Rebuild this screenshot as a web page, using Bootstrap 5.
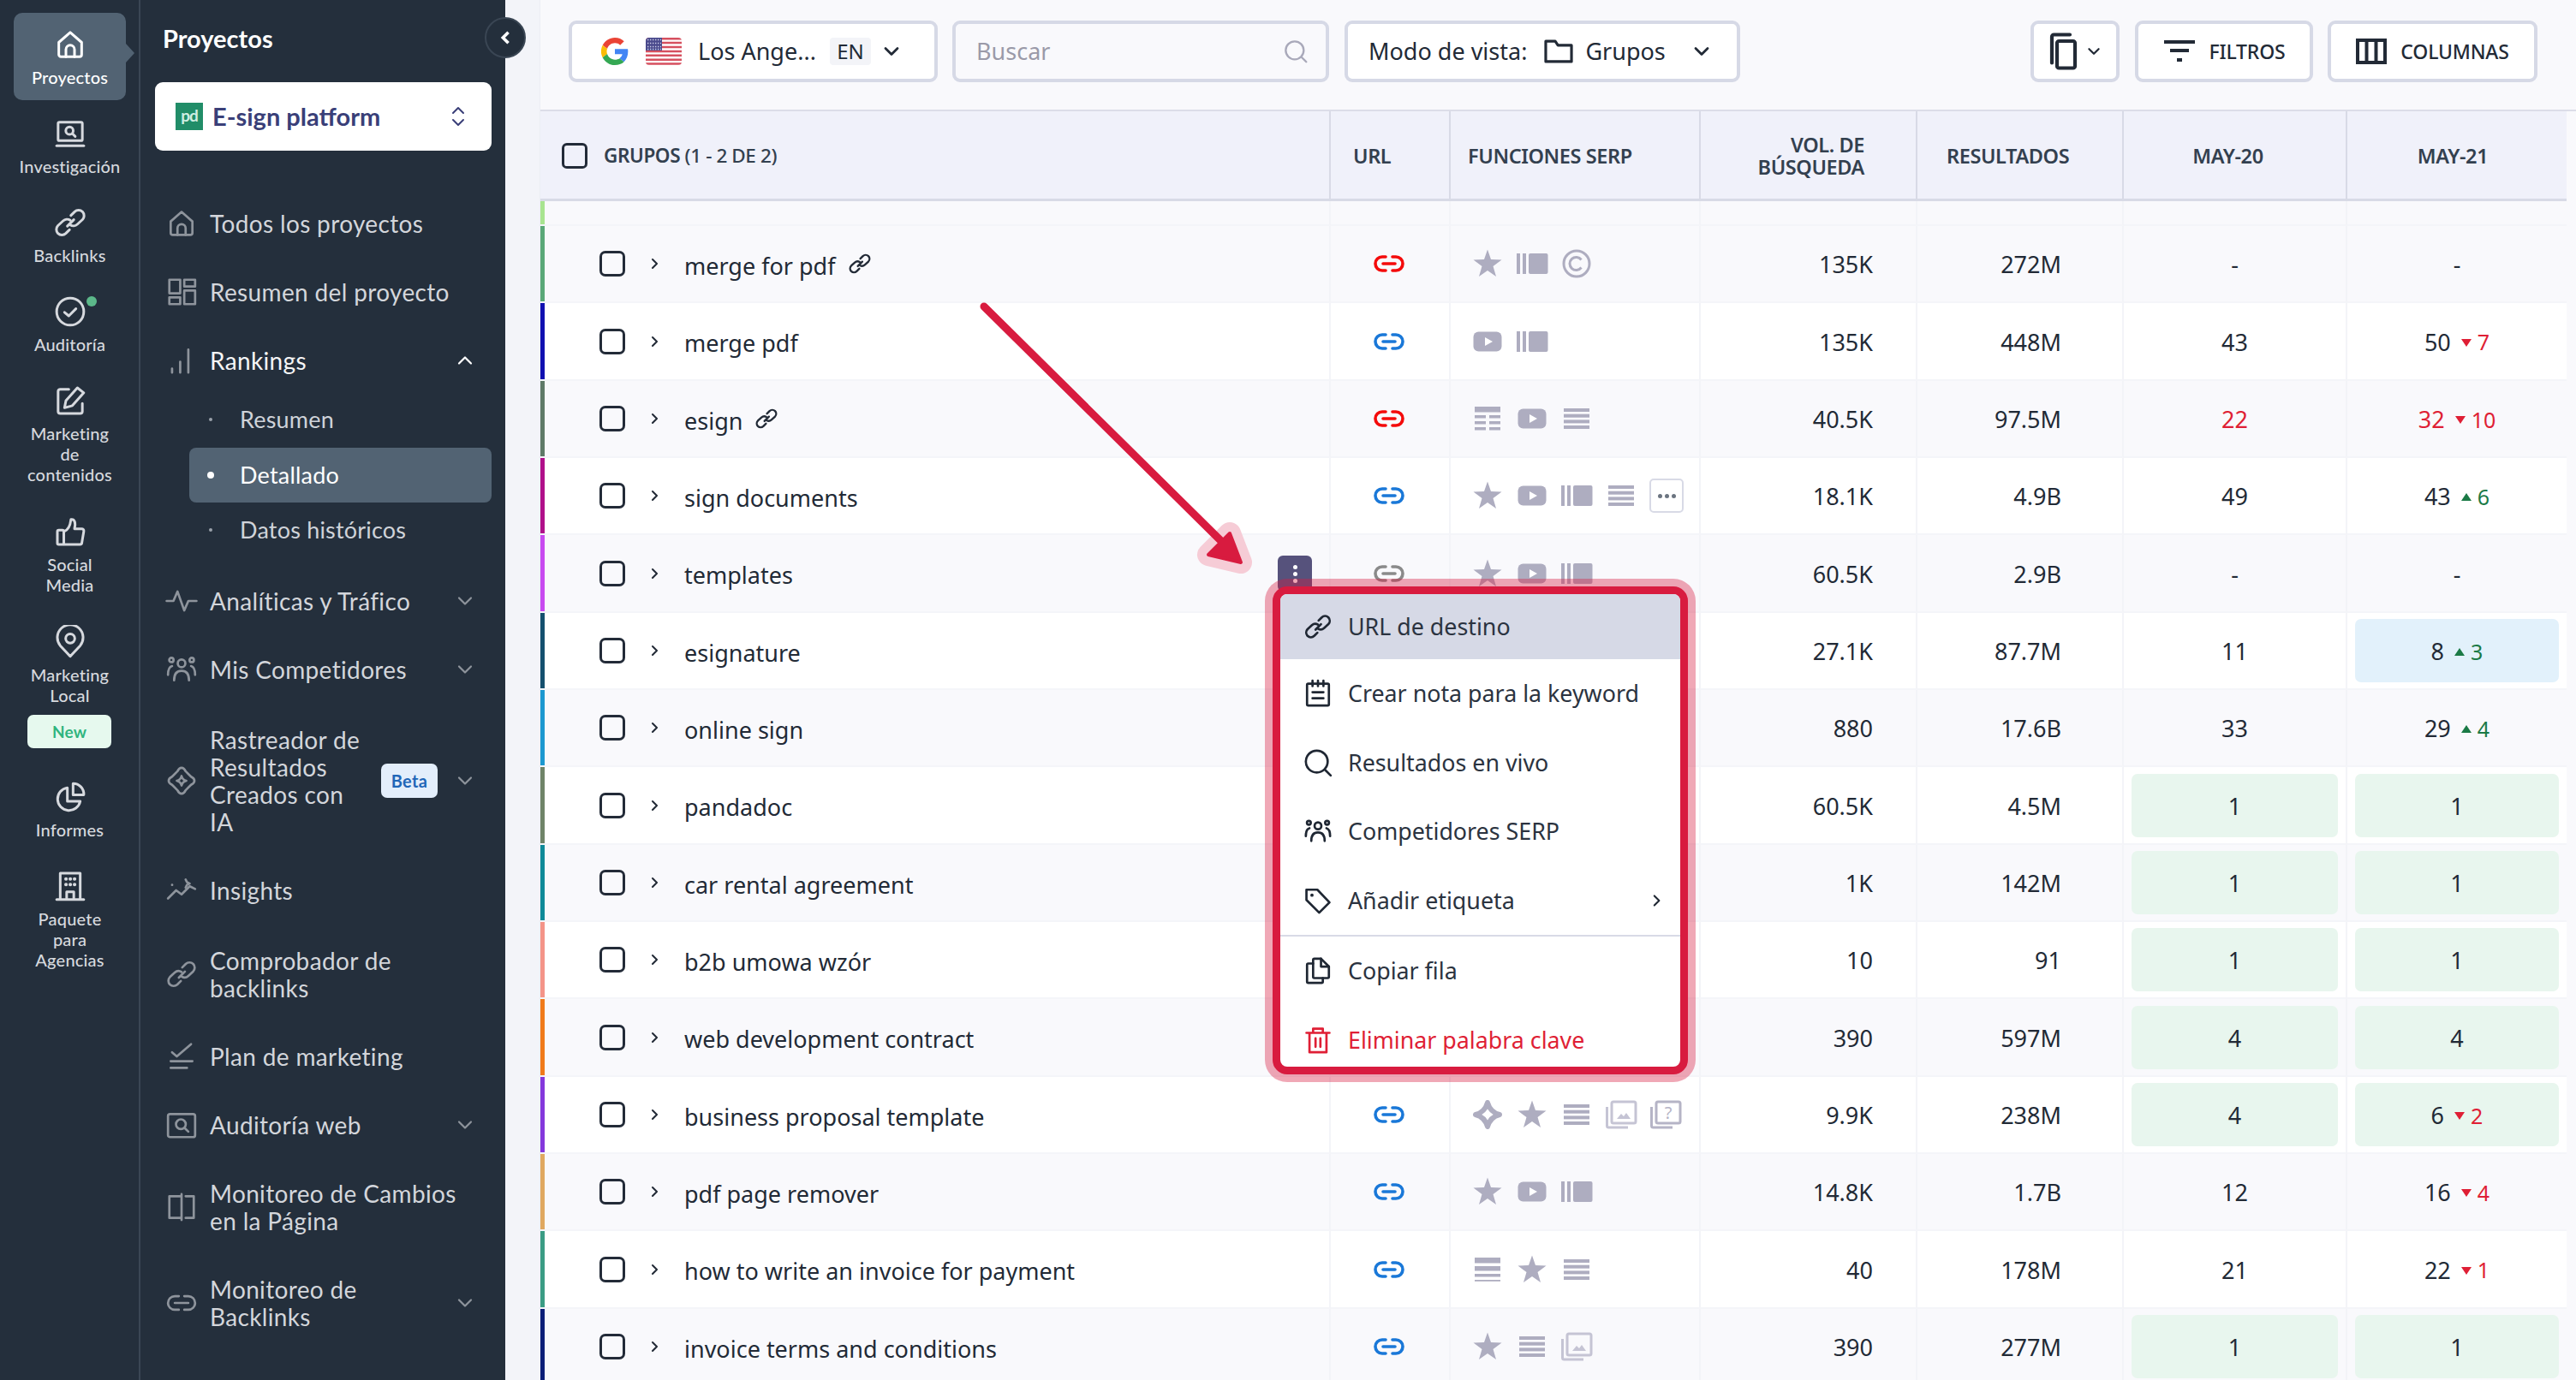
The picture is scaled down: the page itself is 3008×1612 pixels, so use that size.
<!DOCTYPE html>
<html lang="es">
<head>
  <meta charset="UTF-8">
  <meta name="viewport" content="width=device-width, initial-scale=1">
  <title>Rankings - Detallado</title>
  <link href="https://cdn.jsdelivr.net/npm/bootstrap@5.3.5/dist/css/bootstrap.min.css" rel="stylesheet">
  <style>
    body { width: 3008px; height: 1612px; overflow: hidden; background: #f3f4f9; position: relative; font-family: "Noto Sans", sans-serif; color: #222a36; }
    a { text-decoration: none; }
    .ico { fill: none; stroke: currentColor; stroke-width: 1.8; stroke-linecap: round; stroke-linejoin: round; flex: none; }
    .ico.w2 { stroke-width: 2; }
    .ico.w3 { stroke-width: 2.8; }
    .ico.w4 { stroke-width: 4; stroke-linecap: butt; stroke-linejoin: miter; }

    /* rail */
    .rail { width: 164px; background: #242f3c; border-right: 2px solid #3a4654; font-family: Lato, sans-serif; flex: none; }
    .rail-item { width: 131px; margin-left: 16px; padding: 19px 0 17px; color: #d6d9de; font-size: 20px; line-height: 24px; font-weight: 500; text-align: center; position: relative; letter-spacing: .2px; }
    .rail-item .ico { width: 40px; height: 40px; margin: -2px auto 6px; display: block; stroke-width: 1.8; }
    .rail-on { background: #526373; border-radius: 10px; color: #fff; padding-bottom: 15px; margin-top: 15px; margin-bottom: 2px; }
    .rail-on::after { content: ""; position: absolute; left: 100%; top: 36px; border-left: 10px solid #526373; border-top: 11px solid transparent; border-bottom: 11px solid transparent; }
    .rail-tall { padding-bottom: 18px; }
    .rail-dot { position: absolute; left: 85px; top: 19px; width: 12px; height: 12px; border-radius: 50%; background: #5cb88a; }
    .rail-new { display: block; margin: 11px 0 3px 16px; height: 39px; background: #e6f9ee; color: #2fb57e; border-radius: 7px; font-weight: 700; font-size: 19px; line-height: 40px; width: 98px; }

    /* project panel */
    .panel { width: 426px; background: #242f3c; font-family: Lato, sans-serif; flex: none; padding-left: 17px; padding-right: 16px; }
    .panel-title { color: #fff; font-size: 29px; font-weight: 700; line-height: 32px; padding: 29px 0 0 9px; margin-bottom: 35px; }
    .project-pick { height: 80px; background: #fff; border-radius: 9px; padding: 0 30px 0 24px; color: #3a3f78; font-size: 29px; font-weight: 700; margin-bottom: 45px; }
    .pd-logo { width: 32px; height: 32px; background: #218d68; color: #cfeee2; font-size: 19px; font-weight: 700; line-height: 30px; text-align: center; margin-right: 11px; letter-spacing: -1px; }
    .side-link { display: flex; align-items: center; padding: 24px 21px 24px 15px; color: #d3d6db; font-size: 28px; line-height: 32px; letter-spacing: .35px; }
    .side-link > .ico:first-child { width: 38px; height: 38px; margin: -3px 14px -3px -3px; color: #8e949c; stroke-width: 1.7; }
    .side-link .side-text { flex: 1 1 auto; min-width: 0; }
    .side-link .side-more { width: 20px; height: 20px; color: #8e949c; stroke-width: 2.2; margin-left: 8px; }
    .side-on { color: #f4f5f6; }
    .side-nudge { margin-top: 2px; }
    .side-sub { margin: -3px 0 10px 40px; }
    .sub-link { height: 64.5px; border-radius: 8px; color: #cfd3d9; font-size: 27px; padding-left: 21px; letter-spacing: .2px; }
    .sub-link i { display: block; width: 4px; height: 4px; border-radius: 50%; background: #9aa1aa; margin-right: 32px; margin-left: 2px; }
    .sub-on { background: #526373; color: #fff; }
    .sub-on i { width: 8px; height: 8px; background: #fff; margin-left: 0; margin-right: 30px; }
    .beta-tag { width: 66px; height: 40px; border-radius: 7px; background: #e3eefb; color: #1f66b8; font-size: 20px; font-weight: 700; line-height: 41px; text-align: center; flex: none; margin-right: 14px; }
    .rastreo { max-width: 184px; }
    .collapse-btn { position: absolute; left: 566px; top: 20px; width: 48px; height: 48px; border-radius: 50%; background: #242f3c; border: 2px solid #3a4654; color: #fff; }

    /* toolbar */
    .main-area { width: 2378px; margin-left: 40px; flex: none; background: #f9f9fc; overflow: hidden; border-left: 1px solid #eceef4; }
    .topbar { height: 130px; padding: 24px 45px 0 33px; border-bottom: 2px solid #dcdde8; background: #f9f9fc; font-size: 27px; }
    .tool-box { height: 72px; border: 4px solid #d6d9e6; border-radius: 9px; background: #fff; color: #222a36; font-size: 27px; padding: 0; }
    .tool-small { font-size: 23px; font-weight: 500; letter-spacing: -.2px; }
    .tool-loc { width: 431px; }
    .tool-search { width: 440px; margin-left: 17px; padding: 0 21px 0 24px; background: transparent; }
    .tool-mode { width: 462px; margin-left: 18px; padding-left: 24px; }
    .tool-copy { width: 104px; }
    .tool-filter { width: 208px; margin-left: 18px; }
    .tool-cols { width: 245px; margin-left: 17px; }
    .g-logo { margin-left: 34px; }
    .us-flag { margin-left: 20px; flex: none; }
    .loc-name { margin-left: 19px; }
    .lang-tag { background: #f3f4f8; border-radius: 4px; width: 48px; height: 32px; font-size: 24px; line-height: 32px; text-align: center; margin-left: 16px; }
    .loc-more { margin-left: 14px; }
    .search-field { border: 0; background: transparent; font-size: 27px; padding: 0; outline: none; flex: 1; min-width: 0; color: #222a36; }
    .search-field::placeholder { color: #9a9aa8; }
    .search-ico { color: #a9a9ba; }
    .mode-folder { margin-left: 18px; }
    .mode-name { margin-left: 12px; }
    .mode-more { margin-left: 32px; }

    /* table */
    .kw-table { table-layout: fixed; width: 2366px; margin: 0; border-collapse: separate; border-spacing: 0; font-size: 27px; color: #222a36; }
    .col-kw { width: 923px; }
    .col-url { width: 140px; }
    .col-serp { width: 292px; }
    .col-vol { width: 253px; }
    .col-res { width: 241px; }
    .col-m20 { width: 261px; }
    .col-m21 { width: 256px; }
    .kw-table th { height: 105px; background: #f0f1fa; border-right: 2px solid #d8dae6; border-bottom: 3px solid #d8dae6; font-size: 23.5px; font-weight: 600; color: #33404f; line-height: 26px; padding: 2px 18px 0; vertical-align: middle; letter-spacing: -.4px; }
    .kw-table th:last-child { border-right: 0; }
    .th-group { padding-left: 7px; }
    .th-label { margin-left: 19px; font-size: 22.5px; }
    .th-url { padding-left: 26px !important; }
    .th-serp { padding-left: 20px !important; }
    .th-vol { padding-right: 60px !important; }
    .th-res { padding-left: 34px !important; }
    .th-m20 { padding-right: 34px !important; }
    .th-m21 { padding-right: 28px !important; }
    .kw-table td { height: 90px; padding: 0; border-right: 2px solid #f3f4f8; border-bottom: 2px solid #f4f5f9; background: #fff; vertical-align: middle; position: relative; }
    .kw-table tr:nth-child(3n) td { height: 91px; }
    .kw-table tr:nth-child(even) td { background: #f9f9fc; }
    .kw-table td:last-child { border-right: 0; }
    .kw-table td:first-child::before { content: ""; position: absolute; left: 0; top: 0; bottom: 0; width: 5px; background: var(--bar); }
    .kw-table .part-row td { height: 29px; background: #f9f9fc; }
    .kw-check { width: 30px; height: 30px; margin: 0; border: 3px solid #232b38; border-radius: 4px; background-color: transparent; flex: none; }
    .kw-name { padding-left: 69px; }
    .kw-label { margin-top: 6px; }
    .kw-arrow { width: 16px; height: 20px; margin: 0 26px 0 27px; }
    .kw-link { width: 28px; height: 28px; margin-left: 14px; }
    .url-chip { width: 36px; height: 20px; display: block; margin: 0 auto 0 50px; fill: none; stroke: currentColor; stroke-width: 3.6; stroke-linecap: round; }
    .chip-red { color: #f40b0b; }
    .chip-blue { color: #1a78d8; }
    .chip-grey { color: #8a8a8a; }
    .serp-row { padding-left: 24px; gap: 14px; }
    .serp-ico { width: 38px; height: 34px; fill: #aeadc0; flex: none; }
    .serp-more { width: 40px; height: 40px; border: 2px solid #d8dae6; border-radius: 5px; gap: 3px; flex: none; background: #fff; }
    .serp-more i { width: 5px; height: 5px; border-radius: 50%; background: #6b7480; display: block; }
    .num-vol { text-align: right; padding: 3px 50px 0 0 !important; }
    .num-res { text-align: right; padding: 3px 71px 0 0 !important; }
    .rank-cell { padding: 7px 9px !important; text-align: center; }
    .rank-box { height: 74px; border-radius: 7px; padding-top: 3px; }
    .rank-green { background: #e8f6ee; }
    .rank-blue { background: #e2f1fb; }
    .rank-red { color: #df1f35; }
    .delta { font-size: 25px; display: inline-flex; align-items: center; margin-left: 12px; }
    .delta i { display: block; width: 0; height: 0; border-left: 6px solid transparent; border-right: 6px solid transparent; margin-right: 7px; }
    .delta-down { color: #df1f35; }
    .delta-down i { border-top: 9px solid #df1f35; }
    .delta-up { color: #1b7a46; }
    .delta-up i { border-bottom: 9px solid #1b7a46; }

    /* overlays */
    .row-kebab { position: absolute; left: 1492px; top: 649px; width: 40px; height: 42px; background: #56527c; border-radius: 6px; gap: 3px; }
    .row-kebab i { display: block; width: 5px; height: 5px; background: #fff; border-radius: 50%; }
    .big-arrow { position: absolute; left: 0; top: 0; width: 3008px; height: 1612px; pointer-events: none; }
    .row-menu { position: absolute; left: 1486px; top: 685px; width: 485px; height: 570px; margin: 0; padding: 0; border: 9px solid #d81b3f; border-radius: 17px; box-shadow: 0 0 0 9px rgba(216, 27, 63, .38); font-size: 26.8px; overflow: hidden; --bs-dropdown-min-width: 0; }
    .row-menu .dropdown-item { height: 80.5px; display: flex; align-items: center; padding: 0 0 0 79px; color: #2b3340; position: relative; }
    .row-menu .dropdown-item .ico { position: absolute; left: 27px; top: 23px; width: 34px; height: 34px; color: #1f2733; stroke-width: 1.9; }
    .row-menu .item-first { height: 76px; background: #d6d9e6; }
    .row-menu .dropdown-item.item-first .ico { top: 21px; }
    .row-menu .dropdown-item.item-danger, .row-menu .dropdown-item.item-danger .ico { color: #df1f35; }
    .row-menu .dropdown-divider { margin: 0; border-top: 2px solid #d8dae6; opacity: 1; }
    .row-menu .dropdown-item .item-go { left: auto; right: 19px; top: 32px; width: 16px; height: 16px; stroke-width: 2.6; }
  </style>
</head>
<body>

  <svg width="0" height="0" class="position-absolute">
    <defs>
      <symbol id="i-home" viewBox="0 0 24 24"><path d="M4 10.5 12 3.500l8 7V19a1.500 1.500 0 0 1-1.500 1.500h-13A1.500 1.500 0 0 1 4 19z"/><path d="M9 20.500v-5a3 3 0 0 1 6 0v5"/></symbol>
      <symbol id="i-laptop" viewBox="0 0 24 24"><rect x="3.500" y="4" width="17" height="13" rx="1"/><path d="M2.500 20.500h19"/><circle cx="11.500" cy="10" r="2.600"/><path d="m13.500 12 2 2"/></symbol>
      <symbol id="i-chain" viewBox="0 0 24 24"><path d="M10 14.500 14.500 10"/><path d="m12.500 7 2.600-2.600a4 4 0 0 1 5.500 0 4 4 0 0 1 0 5.500L17 13.200a4 4 0 0 1-5 .4"/><path d="M11.500 17 8.900 19.600a4 4 0 0 1-5.500 0 4 4 0 0 1 0-5.500L7 10.800a4 4 0 0 1 5-.4"/></symbol>
      <symbol id="i-check" viewBox="0 0 24 24"><circle cx="12" cy="12" r="9.500"/><path d="m8 12.500 3 2.500 5-5"/></symbol>
      <symbol id="i-edit" viewBox="0 0 24 24"><path d="M11 4H5a1.500 1.500 0 0 0-1.500 1.500v14A1.500 1.500 0 0 0 5 21h14a1.500 1.500 0 0 0 1.500-1.500V14"/><path d="m9 12 8-9 4.500 3.500-8 9L8 17z"/></symbol>
      <symbol id="i-thumb" viewBox="0 0 24 24"><rect x="3" y="11" width="4.500" height="10" rx="1"/><path d="M7.500 12c3-1 4.500-4 5-8.500 2.500-.5 3.500 2 2.500 6.500h5a1.500 1.500 0 0 1 1.500 1.800l-1.300 7.700a1.500 1.500 0 0 1-1.500 1.500H7.500"/></symbol>
      <symbol id="i-pin" viewBox="0 0 24 24"><path d="M12 22 5 14.500a9 9 0 1 1 14 0z"/><circle cx="12" cy="9.500" r="3.200"/></symbol>
      <symbol id="i-pie" viewBox="0 0 24 24"><path d="M10 5.500a8 8 0 1 0 9 9.500h-9z"/><path d="M14 2.500a7.500 7.500 0 0 1 7.500 8H14z"/></symbol>
      <symbol id="i-office" viewBox="0 0 24 24"><path d="M5 21V3h14v18"/><path d="M2.500 21.500h19"/><path d="M9.500 21v-5h5v5"/><path d="M9 7h.1M12 7h.1M15 7h.1M9 11h.1M12 11h.1M15 11h.1" stroke-width="2.400"/></symbol>
      <symbol id="i-grid" viewBox="0 0 24 24"><rect x="3" y="3" width="8" height="10"/><rect x="14" y="3" width="8" height="5"/><rect x="3" y="16" width="8" height="5"/><rect x="14" y="11" width="8" height="10"/></symbol>
      <symbol id="i-bars" viewBox="0 0 24 24"><path d="M5 21v-3M11 21v-8M17 21V4"/></symbol>
      <symbol id="i-pulse" viewBox="0 0 24 24"><path d="M1 12h5l3-7 5 14 3-7h6"/></symbol>
      <symbol id="i-people" viewBox="0 0 24 24"><circle cx="12" cy="7.500" r="2.800"/><circle cx="4.500" cy="5" r="1.600"/><circle cx="19.500" cy="5" r="1.600"/><path d="M6.500 20c0-5 2-7 5.500-7s5.500 2 5.500 7"/><path d="M2 16c0-4 1-6 3-6.500M22 16c0-4-1-6-3-6.500"/></symbol>
      <symbol id="i-ai" viewBox="0 0 24 24"><path d="M12 2.500c1.500 0 2.300 1 3 2.500l4 4c1.500.7 2.500 1.500 2.500 3s-1 2.300-2.500 3l-4 4c-.7 1.500-1.500 2.500-3 2.500s-2.300-1-3-2.500l-4-4c-1.500-.7-2.500-1.500-2.500-3s1-2.300 2.500-3l4-4c.7-1.500 1.500-2.500 3-2.500z"/><path d="M12 8.500c.5 2 1.500 3 3.500 3.500-2 .5-3 1.500-3.500 3.500-.5-2-1.500-3-3.500-3.500 2-.5 3-1.500 3.500-3.500z"/></symbol>
      <symbol id="i-insight" viewBox="0 0 24 24"><path d="m2 18 6-6 4 3 6-6 4 2"/><path d="M5 8h.1M15 4l1 2 2 1-2 1-1 2"/></symbol>
      <symbol id="i-checklist" viewBox="0 0 24 24"><path d="m5 9 3.500 3L19 3"/><path d="M4 15.500h16M4 20.500h12"/></symbol>
      <symbol id="i-websearch" viewBox="0 0 24 24"><rect x="2" y="4" width="20" height="17" rx="1.500"/><circle cx="11.500" cy="11.500" r="3.600"/><path d="m14.500 14.500 2.500 2.500"/></symbol>
      <symbol id="i-page" viewBox="0 0 24 24"><path d="M12 21.500v-19M11 4H3v16h8M15 4h6v16h-6"/></symbol>
      <symbol id="i-chainh" viewBox="0 0 24 24"><path d="M10 7H7a5 5 0 0 0 0 10h3M14 7h3a5 5 0 0 1 0 10h-3M7 12h10"/></symbol>
      <symbol id="i-down" viewBox="0 0 20 20"><path d="m3 6.500 7 7 7-7"/></symbol>
      <symbol id="i-up" viewBox="0 0 20 20"><path d="m3 13.500 7-7 7 7"/></symbol>
      <symbol id="i-right" viewBox="0 0 20 20"><path d="m6 3 7 7-7 7"/></symbol>
      <symbol id="i-left" viewBox="0 0 20 20"><path d="m14 3-7 7 7 7"/></symbol>
      <symbol id="i-note" viewBox="0 0 24 24"><rect x="3" y="4" width="18" height="18" rx="1"/><path d="M7.500 1.500V6M12 1.500V6M16.500 1.500V6M7.500 11h9M7.500 16h9"/></symbol>
      <symbol id="i-search" viewBox="0 0 24 24"><circle cx="11" cy="11" r="9"/><path d="m18 18 4.500 4.500"/></symbol>
      <symbol id="i-tag" viewBox="0 0 24 24"><path d="M2.500 3h9l10 10.500-8.500 8.500L2.500 11.500z"/><path d="M7 7.500h.1" stroke-width="2.600"/></symbol>
      <symbol id="i-copy" viewBox="0 0 24 24"><path d="M14.500 2H9a1 1 0 0 0-1 1v14a1 1 0 0 0 1 1h11a1 1 0 0 0 1-1V8.500z"/><path d="M14.500 2v6.500H21"/><path d="M8 6H4a1 1 0 0 0-1 1v14a1 1 0 0 0 1 1h11a1 1 0 0 0 1-1v-3"/></symbol>
      <symbol id="i-trash" viewBox="0 0 24 24"><path d="M2.500 6h19M8 6V2.500h8V6M5 6v16h14V6M10 10.500v7M14 10.500v7"/></symbol>

      <symbol id="s-star" viewBox="0 0 38 34"><polygon points="19,0.500 23,12 35.500,12.500 25.500,20 29,32 19,25 9,32 12.500,20 2.500,12.500 15,12"/></symbol>
      <symbol id="s-bars" viewBox="0 0 38 34"><rect x="1" y="5" width="4" height="24"/><rect x="8" y="5" width="4" height="24"/><rect x="15" y="5" width="22.500" height="24" rx="2"/></symbol>
      <symbol id="s-yt" viewBox="0 0 38 34"><rect x="2.500" y="5.500" width="33" height="23" rx="6"/><polygon points="16,12 25,17 16,22" fill="#fff"/></symbol>
      <symbol id="s-lines" viewBox="0 0 38 34"><rect x="4" y="5" width="30" height="4"/><rect x="4" y="11.700" width="30" height="4"/><rect x="4" y="18.400" width="30" height="4"/><rect x="4" y="25" width="30" height="4"/></symbol>
      <symbol id="s-table" viewBox="0 0 38 34"><rect x="4" y="3" width="30" height="6.500"/><rect x="4" y="13" width="13" height="3.500"/><rect x="21" y="13" width="13" height="3.500"/><rect x="4" y="20" width="13" height="3.500"/><rect x="21" y="20" width="13" height="3.500"/><rect x="4" y="27" width="13" height="3.500"/><rect x="21" y="27" width="13" height="3.500"/></symbol>
      <symbol id="s-thick" viewBox="0 0 38 34"><rect x="4" y="3" width="30" height="6.500"/><rect x="4" y="13" width="30" height="5.500"/><rect x="4" y="22" width="30" height="3.500"/><rect x="4" y="29" width="30" height="1.800"/></symbol>
      <symbol id="s-copy" viewBox="0 0 38 34"><circle cx="19" cy="17" r="15" fill="none" stroke="#aeadc0" stroke-width="3"/><path d="M24.500 12.500a7.500 7.500 0 1 0 0 9" fill="none" stroke="#aeadc0" stroke-width="3"/></symbol>
      <symbol id="s-ai" viewBox="0 0 38 34"><path d="M19 3C21 10 25 15 33 17 25 19 21 24 19 31 17 24 13 19 5 17 13 15 17 10 19 3Z" fill="none" stroke="#aeadc0" stroke-width="6" stroke-linejoin="round"/></symbol>
      <symbol id="s-img" viewBox="0 0 38 34"><rect x="8" y="2" width="28" height="25" rx="2" fill="none" stroke="#c5c4d4" stroke-width="3"/><path d="M2.500 8v22a2 2 0 0 0 2 2H27" fill="none" stroke="#c5c4d4" stroke-width="3"/><path d="M14 22l5-6 3 3 3-4 5 7z" fill="#c5c4d4"/></symbol>
      <symbol id="s-ask" viewBox="0 0 38 34"><rect x="8" y="2" width="28" height="25" rx="2" fill="none" stroke="#b5b4c6" stroke-width="3"/><path d="M2.500 8v22a2 2 0 0 0 2 2H27" fill="none" stroke="#b5b4c6" stroke-width="3"/><text x="22" y="22" text-anchor="middle" font-family="Noto Sans, sans-serif" font-size="20" fill="#b5b4c6">?</text></symbol>
    </defs>
  </svg>

  <div class="d-flex h-100">
    <nav class="rail">
      <div class="rail-item rail-on"><svg class="ico"><use href="#i-home"/></svg>Proyectos</div>
      <div class="rail-item"><svg class="ico"><use href="#i-laptop"/></svg>Investigación</div>
      <div class="rail-item"><svg class="ico"><use href="#i-chain"/></svg>Backlinks</div>
      <div class="rail-item"><svg class="ico"><use href="#i-check"/></svg><span class="rail-dot"></span>Auditoría</div>
      <div class="rail-item rail-tall"><svg class="ico"><use href="#i-edit"/></svg>Marketing<br>de<br>contenidos</div>
      <div class="rail-item rail-tall"><svg class="ico"><use href="#i-thumb"/></svg>Social<br>Media</div>
      <div class="rail-item"><svg class="ico"><use href="#i-pin"/></svg>Marketing<br>Local<span class="rail-new">New</span></div>
      <div class="rail-item"><svg class="ico"><use href="#i-pie"/></svg>Informes</div>
      <div class="rail-item"><svg class="ico"><use href="#i-office"/></svg>Paquete<br>para<br>Agencias</div>
    </nav>

    <aside class="panel">
      <div class="panel-title">Proyectos</div>
      <div class="project-pick d-flex align-items-center">
        <span class="pd-logo">pd</span>
        <span class="flex-grow-1">E-sign platform</span>
        <svg class="ico w2" width="18" height="26" viewBox="0 0 18 26"><path d="m3 9 6-6 6 6M3 17l6 6 6-6"/></svg>
      </div>
      <a class="side-link"><svg class="ico"><use href="#i-home"/></svg><span class="side-text">Todos los proyectos</span></a>
      <a class="side-link"><svg class="ico"><use href="#i-grid"/></svg><span class="side-text">Resumen del proyecto</span></a>
      <a class="side-link side-on"><svg class="ico"><use href="#i-bars"/></svg><span class="side-text">Rankings</span><svg class="ico side-more text-white"><use href="#i-up"/></svg></a>
      <div class="side-sub">
        <div class="sub-link d-flex align-items-center"><i></i>Resumen</div>
        <div class="sub-link sub-on d-flex align-items-center"><i></i>Detallado</div>
        <div class="sub-link d-flex align-items-center"><i></i>Datos históricos</div>
      </div>
      <a class="side-link"><svg class="ico"><use href="#i-pulse"/></svg><span class="side-text">Analíticas y Tráfico</span><svg class="ico side-more"><use href="#i-down"/></svg></a>
      <a class="side-link"><svg class="ico"><use href="#i-people"/></svg><span class="side-text">Mis Competidores</span><svg class="ico side-more"><use href="#i-down"/></svg></a>
      <a class="side-link side-nudge"><svg class="ico"><use href="#i-ai"/></svg><span class="side-text"><span class="d-block rastreo">Rastreador de Resultados Creados con IA</span></span><span class="beta-tag">Beta</span><svg class="ico side-more"><use href="#i-down"/></svg></a>
      <a class="side-link"><svg class="ico"><use href="#i-insight"/></svg><span class="side-text">Insights</span></a>
      <a class="side-link side-nudge"><svg class="ico"><use href="#i-chain"/></svg><span class="side-text">Comprobador de<br>backlinks</span></a>
      <a class="side-link"><svg class="ico"><use href="#i-checklist"/></svg><span class="side-text">Plan de marketing</span></a>
      <a class="side-link"><svg class="ico"><use href="#i-websearch"/></svg><span class="side-text">Auditoría web</span><svg class="ico side-more"><use href="#i-down"/></svg></a>
      <a class="side-link"><svg class="ico"><use href="#i-page"/></svg><span class="side-text">Monitoreo de Cambios<br>en la Página</span></a>
      <a class="side-link"><svg class="ico"><use href="#i-chainh"/></svg><span class="side-text">Monitoreo de<br>Backlinks</span><svg class="ico side-more"><use href="#i-down"/></svg></a>
    </aside>

    <main class="main-area">
      <div class="topbar d-flex">
        <button class="btn tool-box tool-loc d-flex align-items-center">
          <svg class="g-logo" width="32" height="32" viewBox="0 0 48 48"><path fill="#ea4335" d="M24 9.500c3.500 0 6.700 1.200 9.200 3.600l6.900-6.900C35.900 2.400 30.500 0 24 0 14.600 0 6.500 5.400 2.600 13.200l8 6.200C12.400 13.700 17.700 9.500 24 9.500z"/><path fill="#4285f4" d="M47 24.500c0-1.600-.1-3.100-.4-4.500H24v9h13c-.6 3-2.200 5.500-4.800 7.200l7.700 6C44.400 38 47 31.800 47 24.500z"/><path fill="#fbbc05" d="M10.500 28.600A14.500 14.500 0 0 1 10.500 19.400l-8-6.200a24 24 0 0 0 0 21.600z"/><path fill="#34a853" d="M24 48c6.500 0 11.900-2.100 15.900-5.800l-7.700-6c-2.200 1.400-4.900 2.300-8.200 2.300-6.300 0-11.600-4.200-13.500-9.900l-8 6.200C6.500 42.600 14.600 48 24 48z"/></svg>
          <svg class="us-flag" width="42" height="32" viewBox="0 0 42 32">
            <defs><clipPath id="flag-clip"><rect width="42" height="32" rx="4"/></clipPath></defs>
            <g clip-path="url(#flag-clip)">
              <rect width="42" height="32" fill="#fff"/>
              <path d="M0 1.200h42M0 6.100h42M0 11h42M0 15.900h42M0 20.800h42M0 25.700h42M0 30.600h42" stroke="#d6505f" stroke-width="2.500"/>
              <rect width="19" height="15" fill="#4a4a8c"/>
              <path d="M2 2.500h16M2 6.500h16M2 10.500h16M2 13.500h16" stroke="#c9cbe6" stroke-width="1.400" stroke-dasharray="1.400 1.600"/>
            </g>
          </svg>
          <span class="loc-name">Los Ange...</span>
          <span class="lang-tag">EN</span>
          <svg class="ico w3 loc-more" width="20" height="20"><use href="#i-down"/></svg>
        </button>
        <div class="tool-box tool-search d-flex align-items-center">
          <input class="search-field" type="text" placeholder="Buscar">
          <svg class="ico w2 search-ico" width="28" height="28"><use href="#i-search"/></svg>
        </div>
        <button class="btn tool-box tool-mode d-flex align-items-center">
          <span>Modo de vista:</span>
          <svg class="ico w2 mode-folder" width="38" height="38" viewBox="0 0 24 24"><path d="M2.500 19.500v-15h7l2 3h10v12z"/></svg>
          <span class="mode-name">Grupos</span>
          <svg class="ico w3 mode-more" width="20" height="20"><use href="#i-down"/></svg>
        </button>
        <button class="btn tool-box tool-copy d-flex align-items-center justify-content-center ms-auto">
          <svg class="ico w3" width="36" height="46" viewBox="0 0 24 30"><path d="M2 24V3.500A1.500 1.500 0 0 1 3.500 2H16"/><rect x="6" y="7" width="14" height="21" rx="1.500"/></svg>
          <svg class="ico w3 ms-2" width="16" height="16"><use href="#i-down"/></svg>
        </button>
        <button class="btn tool-box tool-small tool-filter d-flex align-items-center justify-content-center">
          <svg class="ico w4" width="38" height="28" viewBox="0 0 38 28"><path d="M1 3h36M8 13h22M16 24h6"/></svg>
          <span class="ms-3">FILTROS</span>
        </button>
        <button class="btn tool-box tool-small tool-cols d-flex align-items-center justify-content-center">
          <svg class="ico w4" width="36" height="30" viewBox="0 0 36 30"><rect x="2" y="2" width="32" height="26"/><path d="M12.500 2v26M23.500 2v26"/></svg>
          <span class="ms-3">COLUMNAS</span>
        </button>
      </div>

      <table class="table kw-table">
        <colgroup>
          <col class="col-kw"><col class="col-url"><col class="col-serp"><col class="col-vol"><col class="col-res"><col class="col-m20"><col class="col-m21">
        </colgroup>
        <thead>
          <tr>
            <th><div class="th-group d-flex align-items-center"><input class="form-check-input kw-check" type="checkbox"><span class="th-label">GRUPOS <span class="fw-medium">(1 - 2 DE 2)</span></span></div></th>
            <th class="th-url">URL</th>
            <th class="th-serp">FUNCIONES SERP</th>
            <th class="th-vol text-end">VOL. DE<br>BÚSQUEDA</th>
            <th class="th-res">RESULTADOS</th>
            <th class="th-m20 text-center">MAY-20</th>
            <th class="th-m21 text-center">MAY-21</th>
          </tr>
        </thead>
        <tbody id="filas"></tbody>
      </table>
    </main>
  </div>

  <button class="btn collapse-btn d-flex align-items-center justify-content-center p-0">
    <svg class="ico w4" width="18" height="18"><use href="#i-left"/></svg>
  </button>

  <div class="row-kebab d-flex flex-column align-items-center justify-content-center"><i></i><i></i><i></i></div>

  <svg class="big-arrow" viewBox="0 0 3008 1612">
    <polygon points="1449,657 1411,648 1436,623" fill="#d81b3f" stroke="#f6ccd6" stroke-width="26" stroke-linejoin="round"/>
    <line x1="1149" y1="358" x2="1430" y2="636" stroke="#d81b3f" stroke-width="9" stroke-linecap="round"/>
    <polygon points="1449,657 1411,648 1436,623" fill="#d81b3f" stroke="#d81b3f" stroke-width="4" stroke-linejoin="round"/>
  </svg>

  <div class="dropdown-menu show row-menu">
    <a class="dropdown-item item-first"><svg class="ico"><use href="#i-chain"/></svg>URL de destino</a>
    <a class="dropdown-item"><svg class="ico"><use href="#i-note"/></svg>Crear nota para la keyword</a>
    <a class="dropdown-item"><svg class="ico"><use href="#i-search"/></svg>Resultados en vivo</a>
    <a class="dropdown-item"><svg class="ico"><use href="#i-people"/></svg>Competidores SERP</a>
    <a class="dropdown-item"><svg class="ico"><use href="#i-tag"/></svg>Añadir etiqueta<svg class="ico item-go"><use href="#i-right"/></svg></a>
    <hr class="dropdown-divider">
    <a class="dropdown-item"><svg class="ico"><use href="#i-copy"/></svg>Copiar fila</a>
    <a class="dropdown-item item-danger"><svg class="ico"><use href="#i-trash"/></svg>Eliminar palabra clave</a>
  </div>

  <script>
    // nombre, link, color barra, url, iconos serp, vol, resultados, may-20, may-21, delta, fondo
    const filas = [
      ["merge for pdf", 1, "#5aa878", "red", ["star", "bars", "copy"], "135K", "272M", "-", "-", 0, ""],
      ["merge pdf", 0, "#1010b0", "blue", ["yt", "bars"], "135K", "448M", "43", "50", -7, ""],
      ["esign", 1, "#5f7a68", "red", ["table", "yt", "lines"], "40.5K", "97.5M", "22", "32", -10, "rojo"],
      ["sign documents", 0, "#b0108a", "blue", ["star", "yt", "bars", "lines", "more"], "18.1K", "4.9B", "49", "43", 6, ""],
      ["templates", 0, "#c84af0", "grey", ["star", "yt", "bars"], "60.5K", "2.9B", "-", "-", 0, ""],
      ["esignature", 0, "#14506e", "blue", ["star"], "27.1K", "87.7M", "11", "8", 3, "azul"],
      ["online sign", 0, "#1c98d0", "blue", ["star"], "880", "17.6B", "33", "29", 4, ""],
      ["pandadoc", 0, "#6f8468", "blue", ["star"], "60.5K", "4.5M", "1", "1", 0, "verde"],
      ["car rental agreement", 0, "#0f8a98", "blue", ["star"], "1K", "142M", "1", "1", 0, "verde"],
      ["b2b umowa wzór", 0, "#f49488", "blue", ["star"], "10", "91", "1", "1", 0, "verde"],
      ["web development contract", 0, "#f07a1a", "blue", ["star"], "390", "597M", "4", "4", 0, "verde"],
      ["business proposal template", 0, "#8438dc", "blue", ["ai", "star", "lines", "img", "ask"], "9.9K", "238M", "4", "6", -2, "verde"],
      ["pdf page remover", 0, "#e0a860", "blue", ["star", "yt", "bars"], "14.8K", "1.7B", "12", "16", -4, ""],
      ["how to write an invoice for payment", 0, "#3a9c84", "blue", ["thick", "star", "lines"], "40", "178M", "21", "22", -1, ""],
      ["invoice terms and conditions", 0, "#0c1e78", "blue", ["star", "lines", "img"], "390", "277M", "1", "1", 0, "verde"]
    ];

    function iconosSerp (lista) {
      return lista.map((n) => {
        if (n === "more") {
          return '<span class="serp-more d-flex align-items-center justify-content-center"><i></i><i></i><i></i></span>';
        }
        return `<svg class="serp-ico"><use href="#s-${n}"/></svg>`;
      }).join("");
    }

    function celdaRank (valor, delta, fondo, esUltima) {
      let extra = "";
      if (esUltima && delta !== 0) {
        const tipo = delta < 0 ? "delta-down" : "delta-up";
        extra = `<span class="delta ${tipo}"><i></i>${Math.abs(delta)}</span>`;
      }
      const caja = fondo === "verde" ? "rank-green" : (fondo === "azul" && esUltima ? "rank-blue" : "");
      const rojo = fondo === "rojo" ? "rank-red" : "";
      return `<td class="rank-cell"><div class="rank-box ${caja} ${rojo} d-flex align-items-center justify-content-center">${valor}${extra}</div></td>`;
    }

    const cuerpo = document.getElementById("filas");
    let html = '<tr class="part-row"><td style="--bar:#a8e490"></td><td></td><td></td><td></td><td></td><td></td><td></td></tr>';
    filas.forEach((f) => {
      const enlace = f[1] ? '<svg class="ico w2 kw-link"><use href="#i-chain"/></svg>' : "";
      html += `<tr>
        <td style="--bar:${f[2]}"><div class="kw-name d-flex align-items-center"><input class="form-check-input kw-check" type="checkbox"><svg class="ico w2 kw-arrow" viewBox="0 0 16 20"><path d="m5 5 5 5-5 5"/></svg><span class="kw-label">${f[0]}</span>${enlace}</div></td>
        <td><svg class="url-chip chip-${f[3]}" viewBox="0 0 36 20"><path d="M14 2H10a8 8 0 0 0 0 16h4M22 2h4a8 8 0 0 1 0 16h-4M11 10h14"/></svg></td>
        <td><div class="serp-row d-flex align-items-center">${iconosSerp(f[4])}</div></td>
        <td class="num-vol">${f[5]}</td>
        <td class="num-res">${f[6]}</td>
        ${celdaRank(f[7], 0, f[10], false)}
        ${celdaRank(f[8], f[9], f[10], true)}
      </tr>`;
    });
    cuerpo.innerHTML = html;
  </script>

  <script src="https://cdn.jsdelivr.net/npm/bootstrap@5.3.5/dist/js/bootstrap.bundle.min.js"></script>
</body>
</html>
